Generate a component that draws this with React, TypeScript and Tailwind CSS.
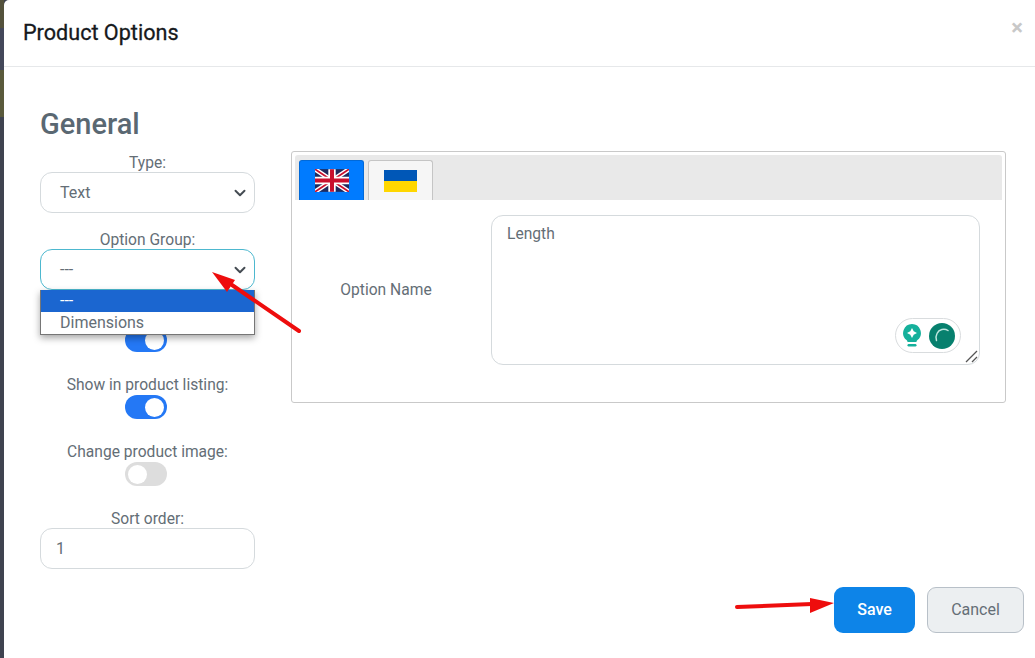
import React from 'react';
import { ChevronDown } from 'lucide-react';

const labelClass = 'block text-center text-[15.6px] leading-[22px] mb-[-2px] text-[#646e76]';
const fieldClass = 'flex h-[41px] w-full items-center rounded-[12px] border bg-white text-[16px] text-[#646e76]';

const Toggle: React.FC<{ on?: boolean; className?: string }> = ({ on, className }) => (
  <div className={`flex justify-center pr-[3px] ${className ?? 'mt-[1px]'}`}>
    <div className={`flex h-[24px] w-[42px] items-center rounded-full px-[3px] ${on ? 'justify-end bg-[#2478f5]' : 'justify-start bg-[#dddddd]'}`}>
      <div className="h-[19px] w-[19px] rounded-full bg-white" />
    </div>
  </div>
);

const UkFlag = () => (
  <svg width="34" height="23" viewBox="0 0 60 40">
    <rect width="60" height="40" fill="#1f2a5e" />
    <path d="M0 0L60 40M60 0L0 40" stroke="#fff" strokeWidth="8" />
    <path d="M0 0L60 40M60 0L0 40" stroke="#c8102e" strokeWidth="3" />
    <path d="M30 0V40M0 20H60" stroke="#fff" strokeWidth="13" />
    <path d="M30 0V40M0 20H60" stroke="#c8102e" strokeWidth="7" />
  </svg>
);

const UaFlag = () => (
  <div className="flex h-[22px] w-[33px] flex-col">
    <div className="flex-1 bg-[#0057b7]" />
    <div className="flex-1 bg-[#ffd700]" />
  </div>
);

export default function App() {
  return (
    <div className="relative flex h-[658px] w-[1035px] overflow-hidden bg-[#3f4350] font-['Roboto',sans-serif]">
      {/* backdrop strip */}
      <div className="flex w-[4px] flex-col">
        <div className="h-[28px] bg-[#54523c]" />
        <div className="h-[42px] bg-[#44485a]" />
        <div className="h-[47px] bg-[#5a5a3c]" />
        <div className="flex-1 bg-[#3f4350]" />
      </div>

      <div className="flex flex-1 flex-col rounded-tl-[5px] bg-white">
        {/* Header */}
        <div className="flex h-[67px] items-center justify-between border-b border-[#e6e8ea] pl-[19px] pr-[12px]">
          <h4 className="text-[21.6px] font-normal leading-none text-[#16191c] [-webkit-text-stroke:0.3px_#16191c]">Product Options</h4>
          <span className="mb-[10px] text-[22px] font-bold leading-none text-[#c8c8c8]">×</span>
        </div>

        {/* Body */}
        <div className="flex-1 pl-[36px] pr-[29px] pt-[39px]">
          <h2 className="mb-[9px] text-[29px] font-medium leading-[36px] text-[#5a6872]">General</h2>

          <div className="flex gap-[36px]">
            <div className="w-[215px] shrink-0">
              <label className={`${labelClass} mt-[1px]`}>Type:</label>
              <div className={`${fieldClass} h-[40px] justify-between border-[#d5dadd] pl-[19px] pr-[5px]`}>
                <span>Text</span>
                <ChevronDown className="h-[18px] w-[18px] text-[#454c53]" strokeWidth={2.6} />
              </div>

              <label className={`${labelClass} mt-[16px]`}>Option Group:</label>
              <div className="relative">
                <div className={`${fieldClass} justify-between border-[#4db8cf] pl-[19px] pr-[5px]`}>
                  <span>---</span>
                  <ChevronDown className="h-[18px] w-[18px] text-[#454c53]" strokeWidth={2.6} />
                </div>
                <div className="absolute left-0 right-0 top-[41px] z-10 border-x border-b border-[#767676] bg-white text-[16px] leading-[22px] text-[#646e76] shadow-[0_3px_7px_rgba(0,0,0,0.35)]">
                  <div className="h-[22px] bg-[#1b66d0] pl-[19px] text-white">---</div>
                  <div className="h-[22px] pl-[19px]">Dimensions</div>
                </div>
              </div>

              <div className="mt-[16px] h-[21px]" />
              <Toggle on />

              <label className={`${labelClass} mt-[22px]`}>Show in product listing:</label>
              <Toggle on />

              <label className={`${labelClass} mt-[22px]`}>Change product image:</label>
              <Toggle />

              <label className={`${labelClass} mt-[22px]`}>Sort order:</label>
              <div className={`${fieldClass} border-[#d5dadd] pl-[15px] pt-[1px]`}>1</div>
            </div>

            {/* Language tabs */}
            <div className="h-[252px] flex-1 rounded-[3px] border border-[#c9c9c9] p-[3px]">
              <div className="flex h-[45px] items-end gap-[4px] rounded-t-[3px] bg-[#e9e9e9] pl-[4px]">
                <div className="flex h-[40px] w-[65px] items-center justify-center rounded-t-[3px] border border-b-0 border-[#0069d9] bg-[#007bff]">
                  <UkFlag />
                </div>
                <div className="flex h-[40px] w-[65px] items-center justify-center rounded-t-[3px] border border-b-0 border-[#c5c5c5] bg-[#f6f6f6]">
                  <UaFlag />
                </div>
              </div>

              <div className="flex pl-[4px] pr-[22px] pt-[15px]">
                <div className="flex h-[150px] w-[192px] items-center justify-center pr-[18px] pt-[2px] text-[15.6px] text-[#646e76]">Option Name</div>
                <div className="relative h-[150px] flex-1 rounded-[12px] border border-[#d5dadd] bg-white px-[15px] py-[7px] text-[15.6px] leading-[22px] text-[#646e76]">
                  Length
                  {/* grammar widget */}
                  <div className="absolute bottom-[11px] right-[18px] flex h-[35px] w-[66px] items-center justify-center gap-[7px] rounded-full border border-[#d9dcde] bg-white">
                    <svg width="20" height="25" viewBox="0 0 20 25">
                      <path d="M10 1a9 9 0 0 1 5.500 16c-.8.7-1 1.300-1 2H5.500c0-.7-.2-1.300-1-2A9 9 0 0 1 10 1z" fill="#15b09b" />
                      <path d="M10 5l1.700 3.300 3.300 1.700-3.300 1.700-1.700 3.300-1.700-3.300-3.300-1.700 3.300-1.700z" fill="#fff" />
                      <rect x="5.500" y="21" width="9" height="2.500" rx="1.200" fill="#15b09b" />
                    </svg>
                    <svg width="26" height="26" viewBox="0 0 26 26">
                      <circle cx="13" cy="13" r="13" fill="#07806e" />
                      <path d="M19 7.500a7.500 7.500 0 0 0-11 3 9 9 0 0 0-.5 7" fill="none" stroke="#bfe6df" strokeWidth="1.500" strokeLinecap="round" />
                    </svg>
                  </div>
                  {/* resize handle */}
                  <svg className="absolute bottom-[1px] right-[1px]" width="13" height="13" viewBox="0 0 13 13">
                    <path d="M1 12L12 1M7 12L12 7" stroke="#555" strokeWidth="1.300" />
                  </svg>
                </div>
              </div>
            </div>
          </div>
        </div>

        {/* Footer */}
        <div className="flex justify-end gap-[12px] pb-[25px] pr-[11px]">
          <button className="h-[46px] w-[81px] rounded-[9px] bg-[#0d84e8] text-[16px] font-medium text-white">Save</button>
          <button className="h-[46px] w-[97px] rounded-[9px] border border-[#b8c0c8] bg-[#eceff1] text-[16px] text-[#646e76]">Cancel</button>
        </div>
      </div>

      {/* red annotation arrows */}
      <svg className="pointer-events-none absolute left-0 top-0 z-20" width="1035" height="658" viewBox="0 0 1035 658">
        <path d="M299 331L232 285" stroke="#ee0d0d" strokeWidth="4" strokeLinecap="round" />
        <path d="M212 272L235 280L227 292z" fill="#ee0d0d" />
        <path d="M737 607L812 604" stroke="#ee0d0d" strokeWidth="4" strokeLinecap="round" />
        <path d="M834 603L810 598L810 613z" fill="#ee0d0d" />
      </svg>
    </div>
  );
}
